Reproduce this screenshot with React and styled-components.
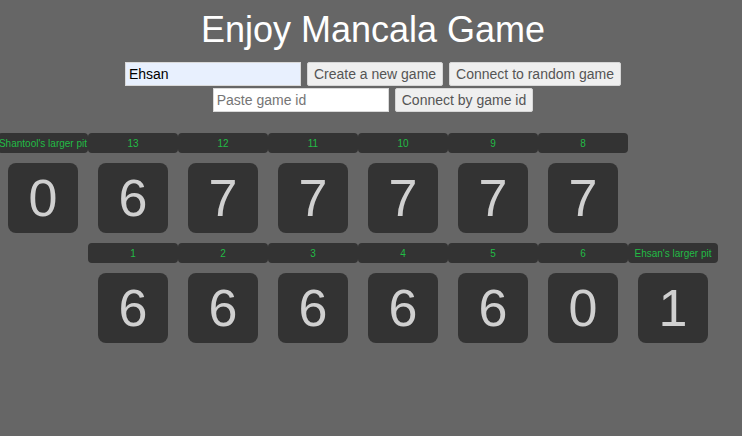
import React from "react";
import styled, { createGlobalStyle } from "styled-components";

const Global = createGlobalStyle`
  html, body {
    margin: 0;
    padding: 0;
    background: #666666;
    font-family: "Liberation Sans", Arial, sans-serif;
  }
`;

const Page = styled.div`
  display: flex;
  flex-direction: column;
  padding-top: 9px;
`;

const Header = styled.header`
  display: flex;
  flex-direction: column;
  align-items: center;
  padding-left: 4px;
`;

const Title = styled.h1`
  margin: 0 0 11px;
  font-size: 36px;
  line-height: 42px;
  font-weight: normal;
  color: #ffffff;
`;

const Controls = styled.div`
  display: flex;
  justify-content: center;
  gap: 6px;
  margin-bottom: ${(p) => p.$mb || 0}px;
`;

const TextInput = styled.input`
  box-sizing: border-box;
  width: 176px;
  height: 24px;
  margin: 0;
  padding: 1px 3px;
  border: 1px solid #d9d9d9;
  border-radius: 0;
  background: ${(p) => (p.$filled ? "#e8f0fe" : "#ffffff")};
  color: #000;
  font-family: "Liberation Sans", Arial, sans-serif;
  font-size: 14px;
  outline: none;
  &::placeholder {
    color: #757575;
  }
`;

const Button = styled.button`
  box-sizing: border-box;
  height: 24px;
  margin: 0;
  padding: 0 6px;
  border: 1px solid #d6d6d6;
  border-radius: 2px;
  background: #efefef;
  color: #555555;
  font-family: "Liberation Sans", Arial, sans-serif;
  font-size: 14px;
  white-space: nowrap;
`;

const Board = styled.div`
  display: grid;
  grid-template-columns: repeat(8, 90px);
  margin-left: -2px;
  margin-top: 21px;
`;

const Label = styled.div`
  grid-column: ${(p) => p.$col};
  height: 20px;
  display: flex;
  align-items: center;
  justify-content: center;
  background: #333333;
  border-radius: 4px;
  color: #22bb45;
  font-size: 10px;
  white-space: nowrap;
  margin-bottom: 10px;
`;

const PitCell = styled.div`
  grid-column: ${(p) => p.$col};
  display: flex;
  justify-content: center;
  margin-bottom: 10px;
`;

const Pit = styled.div`
  width: 70px;
  height: 70px;
  border-radius: 8px;
  background: #333333;
  color: #d0d0d0;
  font-size: 52px;
  display: flex;
  align-items: center;
  justify-content: center;
`;

const topLabels = ["Shantool's larger pit", "13", "12", "11", "10", "9", "8"];
const topPits = [0, 6, 7, 7, 7, 7, 7];
const bottomLabels = ["1", "2", "3", "4", "5", "6", "Ehsan's larger pit"];
const bottomPits = [6, 6, 6, 6, 6, 0, 1];

export default function App() {
  return (
    <>
      <Global />
      <Page>
        <Header>
          <Title>Enjoy Mancala Game</Title>
          <Controls $mb={2}>
            <TextInput $filled defaultValue="Ehsan" />
            <Button>Create a new game</Button>
            <Button>Connect to random game</Button>
          </Controls>
          <Controls>
            <TextInput placeholder="Paste game id" />
            <Button>Connect by game id</Button>
          </Controls>
        </Header>
        <Board>
          {topLabels.map((t, i) => (
            <Label key={"tl" + i} $col={i + 1}>{t}</Label>
          ))}
          {topPits.map((n, i) => (
            <PitCell key={"tp" + i} $col={i + 1}>
              <Pit>{n}</Pit>
            </PitCell>
          ))}
          {bottomLabels.map((t, i) => (
            <Label key={"bl" + i} $col={i + 2}>{t}</Label>
          ))}
          {bottomPits.map((n, i) => (
            <PitCell key={"bp" + i} $col={i + 2}>
              <Pit>{n}</Pit>
            </PitCell>
          ))}
        </Board>
      </Page>
    </>
  );
}
